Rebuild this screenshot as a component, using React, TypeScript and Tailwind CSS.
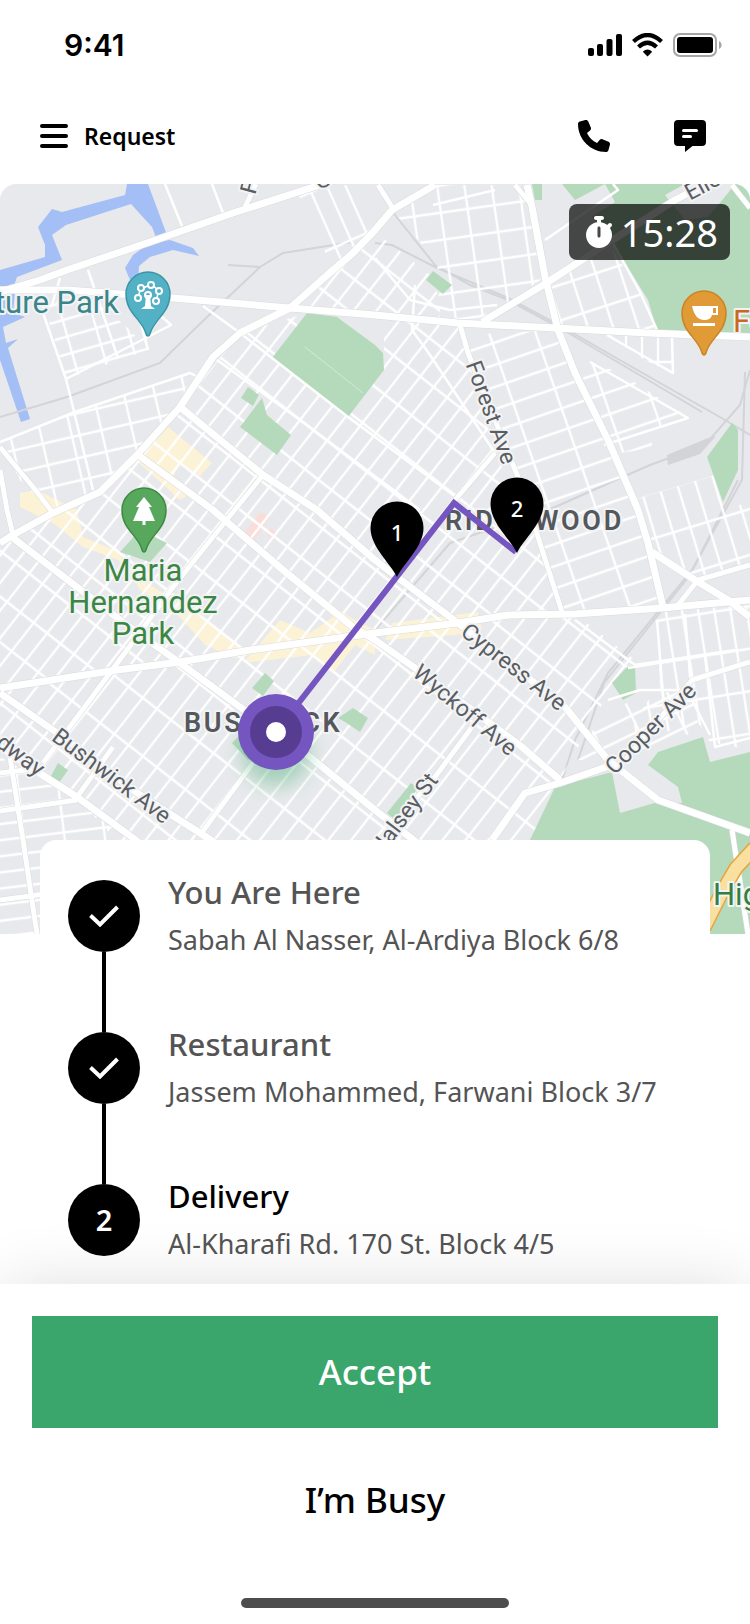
import { FaPhone, FaStopwatch } from "react-icons/fa6";

const STOPS = [
  { title: "You Are Here", address: "Sabah Al Nasser, Al-Ardiya Block 6/8", done: true },
  { title: "Restaurant", address: "Jassem Mohammed, Farwani Block 3/7", done: true },
  { title: "Delivery", address: "Al-Kharafi Rd. 170 St. Block 4/5", done: false },
];

// angle, street spacing and outline of each neighbourhood grid
const GRIDS = [
  { id: "core", w: 17, h: 36, angle: 38, area: "240,333 307,313 272,358 348,417 384,370 384,320 458,324 495,453 540,540 560,612 508,615 375,633 180,662 0,688 0,543 100,492 180,407" },
  { id: "south", w: 18, h: 46, angle: 38, area: "0,688 180,662 375,633 508,615 575,614 635,660 610,690 560,780 490,934 200,934 77,797 0,747" },
  { id: "forest", w: 44, h: 21, angle: -19, area: "462,335 558,330 575,373 608,440 638,510 663,607 560,612 538,537 518,477" },
  { id: "forestEast", w: 44, h: 21, angle: -19, area: "578,366 590,362 620,373 688,417 652,428 652,448 608,455 604,430" },
  { id: "northRail", w: 27, h: 27, angle: -8, area: "435,185 527,185 545,277 482,320 440,318 437,262 392,210" },
  { id: "northEast", w: 24, h: 34, angle: -18, area: "548,282 608,243 640,292 657,330 558,328" },
  { id: "cornerEast", w: 16, h: 60, angle: 0, area: "607,335 673,338 672,373 645,360" },
  { id: "west", w: 30, h: 22, angle: -13, area: "0,442 75,412 190,373 180,407 137,455 100,492 53,512 20,480" },
  { id: "creek", w: 30, h: 17, angle: -16, area: "42,306 85,292 130,330 148,350 66,379 52,330" },
  { id: "northMid", w: 17, h: 60, angle: -24, area: "298,194 352,184 375,232 333,270 322,245" },
  { id: "midWest", w: 18, h: 28, angle: 38, area: "333,272 353,253 375,232 392,245 430,275 440,300 440,318 380,314 300,306" },
  { id: "southWest", w: 40, h: 16, angle: -7, area: "0,757 77,800 145,845 145,934 0,934" },
  { id: "east", w: 16, h: 42, angle: -9, area: "655,612 750,605 750,750 710,742 700,725 625,740 660,680" },
  { id: "yard", w: 18, h: 44, angle: -17, area: "632,500 718,474 730,510 750,500 750,562 698,580 652,552" },
  { id: "cooper", w: 42, h: 17, angle: -26, area: "598,720 640,695 690,690 700,730 610,762 578,760" },
];

const WATER = [
  "127,184 148,184 167,235 157,240 152,227 131,204 66,225 52,235 62,260 17,277 12,292 0,297 0,270 45,257 45,245 38,227 52,209 62,212 125,195",
  "150,243 170,240 193,248 199,256 173,250 150,257 139,266 138,280 130,280 125,268 133,255",
  "0,292 15,292 13,313 25,317 3,327 6,343 18,339 8,348 30,419 21,422 0,360",
];

const PARKS = [
  "307,313 337,317 375,345 383,353 384,370 348,417 272,358",
  "248,387 259,395 253,406 241,398",
  "262,398 267,415 291,435 277,455 240,427",
  "433,271 452,285 443,294 426,280",
  "532,184 542,184 542,200 535,200",
  "562,184 750,184 750,335 657,330 648,300 613,243 600,225 575,200",
  "732,423 738,430 738,470 723,502 707,457",
  "140,530 167,543 150,562 120,552",
  "265,673 274,681 263,696 252,688",
  "353,708 368,718 360,732 345,722 338,718",
  "240,735 260,752 248,760 232,743",
  "58,763 68,770 59,783 51,776",
  "627,667 635,665 636,693 623,700 612,683",
  "411,783 418,788 395,820 387,813",
  "555,787 612,772 620,813 658,802 682,803 678,787 648,765 658,752 703,737 710,762 750,752 750,934 500,934 530,840",
];

const SHOPS = [
  "168,427 212,463 200,476 180,462 173,478 193,492 180,500 138,462",
  "20,493 37,490 77,510 83,537 120,552 123,562 83,547 53,523 20,507",
  "123,560 150,585 190,610 233,640 250,655 235,658 205,645 175,612 140,590",
  "280,620 310,633 333,617 317,597 355,620 375,630 375,655 355,645 333,673 313,655 243,663",
  "392,623 478,612 482,630 455,635 385,640",
];

const RAILS = [
  "0,417 67,397 160,363 207,317 260,267 283,253 353,242",
  "375,243 392,245 435,267 508,298 555,323 632,367 725,420 750,435",
  "378,187 395,215 435,265 470,285 508,300 560,328 702,412",
  "228,265 260,267",
  "750,370 740,405 705,445 650,465 555,507 450,543 375,630",
  "745,372 742,480 692,570 608,673 575,740 562,780",
  "738,480 690,575 604,683 578,760",
];

const MINOR = [
  "42,310 66,379 78,428 93,490",
  "52,305 60,278",
  "88,270 118,358",
  "140,320 148,350",
  "160,315 171,325 66,379",
  "0,442 75,412 190,373 196,376",
  "165,184 182,226",
  "212,184 223,213",
  "203,306 240,333 272,358 348,417 460,500",
  "217,360 300,420 420,510",
  "415,285 412,330 430,355 495,453",
  "607,335 673,373 672,338",
  "590,362 688,418 604,445",
  "575,620 635,665 735,650",
  "628,668 705,655 715,747 750,738",
  "608,700 640,690 690,690",
  "657,620 665,720",
  "685,614 692,700 710,735",
  "613,243 640,292 657,330",
  "433,205 495,190",
  "375,258 410,300 450,310 497,305",
  "613,184 618,190 545,240",
];

const MAJOR = [
  "0,292 40,280 67,270 150,242 233,213 320,185 335,180",
  "0,290 67,290 173,298 290,308 375,315 458,323 555,328 648,333 750,337",
  "435,185 392,210 375,230 353,253 333,270 290,308 240,333 213,357 180,407 137,455 100,492 53,513 13,535 0,543",
  "180,407 263,475 317,510 375,560 397,577 458,623 565,707 608,760 658,800 750,833",
  "138,455 213,510 283,570 353,627 375,640 418,670 522,747 560,780",
  "13,538 120,620 180,663 240,707 310,757 375,810 420,845",
  "0,688 117,670 180,662 250,650 375,633 458,623 508,615 575,614 662,608 750,600",
  "0,693 60,735 140,795 200,833 215,843",
  "0,747 50,780 77,797 133,838 145,848",
  "527,185 532,207 545,277 558,330 575,373 608,440 638,510 648,543 663,607",
  "482,322 548,282 608,243 675,200 708,183",
  "652,552 695,580 728,600 750,617",
  "612,765 560,783 525,793 492,840",
];

const MEDIUM = [
  "263,475 233,512 173,587 127,650 43,763",
  "200,835 253,763",
  "77,797 113,747",
  "460,325 468,353 518,477 538,537 562,612",
  "495,453 455,500",
  "678,605 698,580 750,565",
  "625,760 692,680 750,662",
  "472,727 435,777 412,803",
  "0,447 33,487 53,513",
  "0,470 7,510 13,535",
  "378,185 392,207",
  "515,185 530,203",
  "10,757 23,840 37,934",
  "0,773 43,768",
  "0,811 77,800",
  "0,900 45,894",
  "732,185 750,208",
  "732,830 748,934",
  "245,207 256,184",
];

const STREET_LABELS = [
  { text: "Forest Ave", x: 484, y: 415, angle: 70 },
  { text: "Cypress Ave", x: 509, y: 673, angle: 38 },
  { text: "Wyckoff Ave", x: 460, y: 716, angle: 40 },
  { text: "Cooper Ave", x: 656, y: 734, angle: -45 },
  { text: "Halsey St", x: 410, y: 819, angle: -53 },
  { text: "Bushwick Ave", x: 107, y: 782, angle: 37 },
  { text: "Broadway", x: -3, y: 747, angle: 37 },
  { text: "Eliot Ave", x: 729, y: 180, angle: -28 },
  { text: "F", x: 257, y: 189, angle: -75 },
  { text: "G", x: 325, y: 187, angle: -20 },
];

function PoiPin({ x, y, fill, edge, children }: { x: number; y: number; fill: string; edge: string; children: React.ReactNode }) {
  return (
    <g transform={`translate(${x} ${y})`}>
      <path
        d="M0 0C-2 0-2-3-3-5C-8-18-22-24-22-42A22 22 0 0 1 22-42C22-24 8-18 3-5C2-3 2 0 0 0Z"
        fill={fill}
        stroke={edge}
        strokeWidth="1.5"
      />
      {children}
    </g>
  );
}

function StopPin({ x, y, label }: { x: number; y: number; label: string }) {
  return (
    <g transform={`translate(${x} ${y})`}>
      <path d="M0 0C-6-13-26.5-30-26.5-49A26.5 26.5 0 0 1 26.5-49C26.5-30 6-13 0 0Z" />
      <text y="-36" textAnchor="middle" className="fill-white font-['Noto_Sans',sans-serif] text-[22px] font-medium">
        {label}
      </text>
    </g>
  );
}

function RouteMap() {
  return (
    <svg
      viewBox="0 184 750 750"
      preserveAspectRatio="xMidYMin slice"
      className="block h-[750px] w-full rounded-t-2xl bg-[#e8e9ec] font-[Roboto,sans-serif]"
      role="img"
      aria-label="Route map"
    >
      <defs>
        {GRIDS.map((g) => (
          <pattern key={g.id} id={g.id} width={g.w} height={g.h} patternUnits="userSpaceOnUse" patternTransform={`rotate(${g.angle})`}>
            <path d={`M2 0V${g.h}M0 2H${g.w}`} stroke="#fff" strokeWidth="2.3" />
          </pattern>
        ))}
        <filter id="glow" x="-50%" y="-50%" width="200%" height="200%">
          <feGaussianBlur stdDeviation="10" />
        </filter>
      </defs>

      {WATER.map((p) => <polygon key={p} points={p} fill="#a4bff5" />)}
      {SHOPS.map((p) => <polygon key={p} points={p} fill="#fcf2d6" />)}
      <polygon points="260,512 270,518 253,542 243,535" fill="#fadcd9" />
      <polygon points="270,528 277,533 274,540 267,536" fill="#fadcd9" />

      <g fill="none" stroke="#d2d4d8" strokeWidth="2">
        {RAILS.map((p) => <polyline key={p} points={p} />)}
      </g>
      <polygon points="667,455 708,438 716,436 700,454 668,465" fill="#d2d4d8" />
      {GRIDS.map((g) => <polygon key={g.id} points={g.area} fill={`url(#${g.id})`} />)}
      {PARKS.map((p) => <polygon key={p} points={p} fill="#b5dabb" />)}
      <g fill="#e8e9ec">
        <polygon points="665,195 685,184 735,184 728,193 708,217 685,220" />
        <polygon points="562,207 605,184 615,202 582,223" />
      </g>
      <polyline points="305,347 363,393" stroke="#d3ead6" fill="none" />

      <g fill="none" strokeLinejoin="round">
        <g stroke="#fff" strokeWidth="2.5">
          {MINOR.map((p) => <polyline key={p} points={p} />)}
        </g>
        <g stroke="#d9dbde">
          {MEDIUM.map((p) => <polyline key={p} points={p} strokeWidth="6" />)}
          {MAJOR.map((p) => <polyline key={p} points={p} strokeWidth="8" />)}
        </g>
        <g stroke="#fff">
          {MEDIUM.map((p) => <polyline key={p} points={p} strokeWidth="5" />)}
          {MAJOR.map((p) => <polyline key={p} points={p} strokeWidth="7" />)}
        </g>
        <polyline points="760,842 736,868 722,892 704,928" stroke="#e6a43c" strokeWidth="15" />
        <polyline points="760,842 736,868 722,892 704,928" stroke="#f9dfa0" strokeWidth="12" />
      </g>

      <g stroke="#f2f3f5" strokeWidth="4" strokeLinejoin="round" className="[paint-order:stroke]">
        <g fill="#5a5d61" className="text-[23px]" textAnchor="middle">
          {STREET_LABELS.map((l) => (
            <text key={l.text} transform={`translate(${l.x} ${l.y}) rotate(${l.angle})`}>{l.text}</text>
          ))}
        </g>
        <g fill="#54575c" className="text-[27px] font-semibold tracking-widest">
          <text x="184" y="732">BUSHWICK</text>
          <text x="445" y="530">RIDGEWOOD</text>
        </g>
        <g className="text-[31px]">
          <text x="119" y="313" textAnchor="end" fill="#3b8589">Nature Park</text>
          <text x="733" y="332" fill="#c8691f">Food</text>
          <text x="713" y="905" fill="#36803f">Highland</text>
          <g fill="#3c8644" textAnchor="middle">
            <text x="143" y="581">Maria</text>
            <text x="143" y="613">Hernandez</text>
            <text x="143" y="644">Park</text>
          </g>
        </g>
      </g>

      <PoiPin x={148} y={336} fill="#52b1c4" edge="#3c95a5">
        <path d="M-10-38L-8-46L3-52L11-45L8-36" fill="none" stroke="#fff" strokeWidth="1.5" />
        <g fill="#52b1c4" stroke="#fff" strokeWidth="2">
          <circle cx="-10" cy="-38" r="3" />
          <circle cx="-7" cy="-48" r="3" />
          <circle cx="3" cy="-51" r="3" />
          <circle cx="11" cy="-45" r="3" />
          <circle cx="8" cy="-35" r="3" />
          <circle cx="0" cy="-41" r="3" />
        </g>
        <path d="M-2-41H2L3-30L7-27H-7L-3-30Z" fill="#fff" />
      </PoiPin>
      <PoiPin x={144} y={552} fill="#57a75c" edge="#3e8a45">
        <path d="M0-55L8-45H5L11-31H1.500V-27H-1.500V-31H-11L-5-45H-8Z" fill="#fff" />
      </PoiPin>
      <PoiPin x={704} y={355} fill="#e09b37" edge="#c98425">
        <path d="M-12-49H14V-40H8C7-36 4-35 0-35C-6-35-10-40-12-49ZM9-47V-42H12V-47Z" fill="#fff" fillRule="evenodd" />
        <path d="M-11-32H11V-29H-11Z" fill="#fff" />
      </PoiPin>

      <circle cx="276" cy="752" r="34" fill="#3aa76d" opacity="0.4" filter="url(#glow)" />
      <polyline points="276,732 454,503 516,552" fill="none" stroke="#7555bf" strokeWidth="6" />
      <StopPin x={397} y={577} label="1" />
      <StopPin x={517} y={553} label="2" />
      <circle cx="276" cy="732" r="38" fill="#7555bf" />
      <circle cx="276" cy="732" r="26" fill="#573d92" />
      <circle cx="276" cy="732" r="10" fill="#fff" />
    </svg>
  );
}

function StatusBar() {
  return (
    <div className="flex h-[90px] items-center justify-between pl-16 pr-7">
      <span className="font-[Inter,sans-serif] text-[30px] font-semibold">9:41</span>
      <svg width="134" height="24" viewBox="0 0 134 24" aria-hidden="true">
        <rect x="0" y="15" width="6" height="8" rx="2" />
        <rect x="9" y="11" width="6" height="12" rx="2" />
        <rect x="18.500" y="6" width="6" height="17" rx="2" />
        <rect x="28" y="1" width="6" height="22" rx="2" />
        <g fill="none" stroke="#000" strokeWidth="4.200">
          <path d="M45.500 8.500Q59.500-4.500 73.500 8.500" />
          <path d="M50.500 14Q59.500 5.500 68.500 14" />
        </g>
        <path d="M59.500 23.500L54.800 18.700Q59.500 14.500 64.200 18.700Z" />
        <rect x="86" y="1" width="42" height="22" rx="6" fill="none" stroke="#a6a6a6" strokeWidth="2" />
        <rect x="89" y="4" width="36" height="16" rx="3" />
        <path d="M131 8C134.500 9.500 134.500 14.500 131 16Z" fill="#a6a6a6" />
      </svg>
    </div>
  );
}

function Header() {
  return (
    <header className="flex h-[94px] items-center justify-between pb-0.5 pl-10 pr-11">
      <div className="flex items-center gap-4">
        <button type="button" aria-label="Menu">
          <svg width="28" height="24" viewBox="0 0 28 24">
            <path d="M2 2H26M2 12H26M2 22H26" stroke="#000" strokeWidth="4" strokeLinecap="round" />
          </svg>
        </button>
        <h1 className="text-[23px] font-semibold">Request</h1>
      </div>
      <div className="flex items-center gap-16">
        <button type="button" aria-label="Call">
          <FaPhone className="size-8" />
        </button>
        <button type="button" aria-label="Message">
          <svg width="32" height="32" viewBox="0 0 32 32">
            <path d="M4 0H28A4 4 0 0 1 32 4V22A4 4 0 0 1 28 26H18.500L11 32V26H4A4 4 0 0 1 0 22V4A4 4 0 0 1 4 0Z" />
            <path d="M9.500 10.500H22.500M9.500 16.500H16.500" stroke="#fff" strokeWidth="3" strokeLinecap="round" />
          </svg>
        </button>
      </div>
    </header>
  );
}

export default function App() {
  return (
    <div className="flex min-h-screen flex-col bg-white font-['Noto_Sans',sans-serif] text-black">
      <StatusBar />
      <Header />

      <main className="flex-1">
        <div className="relative">
          <RouteMap />
          <div className="absolute right-5 top-5 flex h-14 items-center gap-2 rounded-lg bg-black/70 pl-4 pr-3 text-white">
            <FaStopwatch className="h-8 w-7" />
            <time className="text-[38px]">15:28</time>
          </div>
        </div>

        <ol className="relative mx-10 -mt-[94px] rounded-t-2xl bg-white px-7 pt-10">
          {STOPS.map((stop, i) => {
            const last = i === STOPS.length - 1;
            return (
              <li key={stop.title} className={`flex gap-7 ${last ? "h-[100px]" : "h-[152px]"}`}>
                <div className="flex flex-col items-center">
                  <span className="flex size-[72px] shrink-0 items-center justify-center rounded-full bg-black text-[29px] font-semibold text-white">
                    {stop.done ? (
                      <svg width="30" height="22" viewBox="0 0 30 22" aria-label="Done">
                        <path d="M1.500 10.500L11 19.500L28.500 2" fill="none" stroke="#fff" strokeWidth="4" />
                      </svg>
                    ) : (
                      i
                    )}
                  </span>
                  {!last && <span className="w-1 flex-1 bg-black" />}
                </div>
                <div>
                  <h2 className={`text-[31px] font-medium leading-6 ${last ? "text-black" : "text-[#545454]"}`}>
                    {stop.title}
                  </h2>
                  <p className="mt-5 text-[27px] leading-8 text-[#545454]">{stop.address}</p>
                </div>
              </li>
            );
          })}
        </ol>
      </main>

      <footer className="relative flex flex-col items-center bg-white px-8 pb-4 pt-8 shadow-[0_0_64px_-4px_rgba(0,0,0,0.14)]">
        <button type="button" className="h-28 w-full bg-[#3ba66c] text-[35px] font-medium text-white">
          Accept
        </button>
        <button type="button" className="mt-4 h-28 w-full text-[35px] font-medium">
          I’m Busy
        </button>
        <div className="mt-[42px] h-[10px] w-[268px] rounded-full bg-[#4d4d4d]" />
      </footer>
    </div>
  );
}
